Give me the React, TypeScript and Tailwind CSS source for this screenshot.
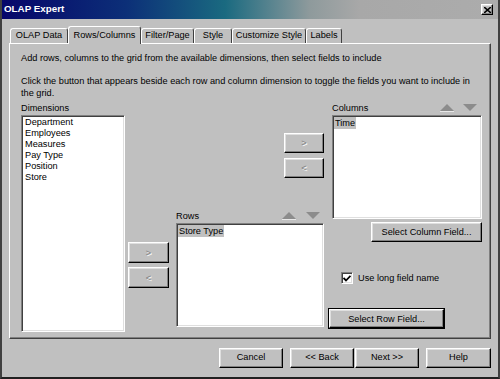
import React from 'react';

const raised =
  'border border-t-white border-l-white border-r-black border-b-black shadow-[inset_-1px_-1px_0_#808080,inset_1px_1px_0_#dfdfdf]';
const sunken =
  'border border-t-[#808080] border-l-[#808080] border-r-white border-b-white shadow-[inset_1px_1px_0_#404040,inset_-1px_-1px_0_#dfdfdf]';

type BtnProps = { label: string; className: string; disabled?: boolean };

const Btn: React.FC<BtnProps> = ({ label, className, disabled }) => (
  <div
    className={`${raised} ${className} flex items-center justify-center bg-[#c0c0c0] ${
      disabled ? 'text-[#808080] [text-shadow:1px_1px_0_#fff]' : 'text-black'
    }`}
  >
    {label}
  </div>
);

const Tab: React.FC<{ label: string; className: string; active?: boolean }> = ({
  label,
  className,
  active,
}) => (
  <div
    className={`${className} flex items-center justify-center rounded-t-[3px] border-t border-l border-r border-t-white border-l-white border-r-[#404040] bg-[#c0c0c0] ${
      active ? 'relative z-10 h-[18px] -mb-px' : 'mt-[2px] h-[15px] pb-[1px]'
    }`}
  >
    {label}
  </div>
);

const Arrows: React.FC<{ gap: string }> = ({ gap }) => (
  <div className={`flex items-center ${gap}`}>
    <svg width="14" height="8" viewBox="0 0 14 8">
      <polygon points="7,0 14,7 0,7" fill="#8c8c8c" />
      <line x1="0" y1="7.5" x2="14" y2="7.5" stroke="#e8e8e8" />
    </svg>
    <svg width="14" height="8" viewBox="0 0 14 8">
      <polygon points="0,0 14,0 7,7" fill="#8c8c8c" />
    </svg>
  </div>
);

const dimensions = ['Department', 'Employees', 'Measures', 'Pay Type', 'Position', 'Store'];

export default function App() {
  return (
    <div className="w-[500px] h-[379px] overflow-hidden bg-[#c0c0c0] border-l-2 border-r-2 border-b-2 border-l-[#404040] border-r-[#404040] border-b-[#202020] font-['Liberation_Sans',Arial,sans-serif] text-[9.2px] text-black flex flex-col">
      {/* title bar */}
      <div className="h-[19px] flex items-center justify-between pl-[2px] pr-[5px] bg-[linear-gradient(to_right,#06066a_0%,#0c2f78_25%,#1a6a80_45%,#8e9a9c_62%,#a8a8a8_72%,#acacac_100%)]">
        <span className="text-white font-bold text-[9.8px]">OLAP Expert</span>
        <div className={`${raised} w-[12px] h-[11px] flex items-center justify-center bg-[#c0c0c0]`}>
          <svg width="7" height="6" viewBox="0 0 7 6">
            <path d="M0 0 L7 6 M7 0 L0 6" stroke="#000" strokeWidth="1.6" />
          </svg>
        </div>
      </div>

      {/* tabs */}
      <div className="mt-[7px] ml-[8px] h-[17px] flex items-start">
        <Tab label="OLAP Data" className="w-[58px]" />
        <Tab label="Rows/Columns" className="w-[73px]" active />
        <Tab label="Filter/Page" className="w-[53px]" />
        <Tab label="Style" className="w-[38px]" />
        <Tab label="Customize Style" className="w-[74px]" />
        <Tab label="Labels" className="w-[36px]" />
      </div>

      {/* panel */}
      <div className="ml-[7px] w-[482px] h-[296px] border border-t-white border-l-white border-r-[#404040] border-b-[#404040] shadow-[inset_-1px_-1px_0_#808080] pl-[11px] pt-[8px] leading-[12px]">
        <div>Add rows, columns to the grid from the available dimensions, then select fields to include</div>
        <div className="mt-[11px] whitespace-nowrap">
          Click the button that appears beside each row and column dimension to toggle the fields you want to include in
          <br />
          the grid.
        </div>

        <div className="mt-[2px] flex items-start">
          {/* dimensions */}
          <div className="w-[104px] flex flex-col">
            <div className="h-[14px] leading-[14px]">Dimensions</div>
            <div className={`${sunken} h-[217px] bg-white pl-[3px] pt-[1px] leading-[11px]`}>
              {dimensions.map((d) => (
                <div key={d}>{d}</div>
              ))}
            </div>
          </div>

          {/* row add/remove */}
          <div className="ml-[3px] w-[41px] pt-[141px] flex flex-col gap-[4px]">
            <Btn label=">" className="h-[21px]" disabled />
            <Btn label="<" className="h-[21px]" disabled />
          </div>

          {/* column buttons + rows */}
          <div className="ml-[7px] w-[148px] flex flex-col">
            <div className="pt-[32px] flex flex-col items-end gap-[5px]">
              <Btn label=">" className="w-[40px] h-[20px]" disabled />
              <Btn label="<" className="w-[40px] h-[20px]" disabled />
            </div>
            <div className="mt-[30px] h-[15px] flex items-center justify-between pr-[4px]">
              <span>Rows</span>
              <Arrows gap="gap-[10px]" />
            </div>
            <div className={`${sunken} h-[104px] bg-white p-[1px]`}>
              <div className="inline-block bg-[#c0c0c0] px-[1px] leading-[12px]">Store Type</div>
            </div>
          </div>

          {/* columns side */}
          <div className="ml-[4px] w-[154px] flex flex-col">
            <div className="ml-[4px] h-[14px] flex items-center justify-between pr-[5px]">
              <span>Columns</span>
              <Arrows gap="gap-[9px]" />
            </div>
            <div className={`${sunken} ml-[4px] w-[150px] h-[104px] bg-white p-[1px]`}>
              <div className="inline-block bg-[#c0c0c0] px-[1px] leading-[12px]">Time</div>
            </div>
            <Btn label="Select Column Field..." className="mt-[3px] self-end w-[111px] h-[20px]" />
            <div className="mt-[30px] ml-[13px] flex items-center gap-[5px]">
              <div className={`${sunken} w-[12px] h-[12px] bg-white flex items-center justify-center`}>
                <svg width="8" height="7" viewBox="0 0 8 7">
                  <path d="M0.5 3 L3 5.5 L7.5 0.8" stroke="#000" strokeWidth="1.8" fill="none" />
                </svg>
              </div>
              <span>Use long field name</span>
            </div>
            <div className="mt-[24px] w-[117px] h-[21px] border border-black">
              <Btn label="Select Row Field..." className="w-full h-full" />
            </div>
          </div>
        </div>
      </div>

      {/* footer buttons */}
      <div className="mt-[9px] ml-[217px] flex items-start">
        <Btn label="Cancel" className="w-[64px] h-[20px]" />
        <Btn label="<< Back" className="ml-[7px] w-[64px] h-[20px]" />
        <Btn label="Next >>" className="ml-[1px] w-[64px] h-[20px]" />
        <Btn label="Help" className="ml-[7px] w-[65px] h-[20px]" />
      </div>
    </div>
  );
}
